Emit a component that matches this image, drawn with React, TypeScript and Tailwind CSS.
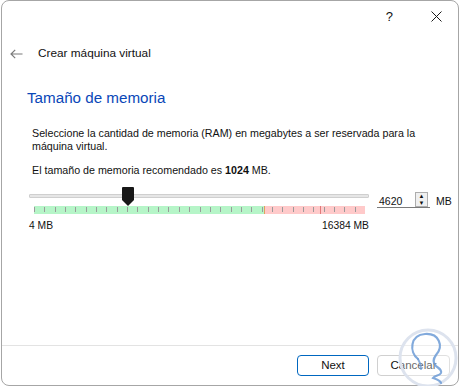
const TICKS = Array.from({ length: 32 }, (_, i) => i);
const BAR_WIDTH = 331;

function BackArrow() {
  return (
    <svg width="13" height="10" viewBox="0 0 13 10" fill="none" stroke="#7a7a7a" strokeWidth="1.2">
      <path d="M12.5 5H1M5.2 0.8L1 5l4.2 4.2" />
    </svg>
  );
}

function CloseIcon() {
  return (
    <svg width="11" height="11" viewBox="0 0 11 11" stroke="#1a1a1a" strokeWidth="1">
      <path d="M0.5 0.5l10 10M10.5 0.5l-10 10" />
    </svg>
  );
}

function Thumb() {
  return (
    <svg width="12" height="19" viewBox="0 0 12 19">
      <path d="M1 0h10a1 1 0 0 1 1 1v12l-6 6-6-6V1a1 1 0 0 1 1-1z" fill="#171717" />
    </svg>
  );
}

function Watermark() {
  return (
    <svg
      className="pointer-events-none absolute left-[396px] top-[326px]"
      width="64"
      height="60"
      viewBox="0 0 64 60"
      fill="none"
    >
      <circle cx="32" cy="32" r="28" stroke="#dde3ee" strokeWidth="3" fill="rgba(255,255,255,0.35)" />
      <path
        d="M22 33C13 26 14 9 29 8c14-1 19 12 11 21-3 4-3 8 0 11 2 2 6 3 5 7-1 3-6 2-8 5 3 1 7 2 8 5"
        stroke="#6c9bd6"
        strokeWidth="2.2"
        strokeLinecap="round"
        opacity="0.85"
      />
      <path d="M22 33c2 3 3 6 3 10" stroke="#6c9bd6" strokeWidth="2" strokeLinecap="round" opacity="0.8" />
    </svg>
  );
}

export default function App() {
  return (
    <div className="relative h-[386px] w-[460px] overflow-hidden bg-white font-['Liberation_Sans',Arial,sans-serif] text-[#111]">
      <div className="ml-[1px] flex h-[386px] w-[458px] flex-col rounded-[8px] border border-[#a6a6a6] bg-white">
        {/* title bar */}
        <div className="flex h-[31px] items-center justify-end">
          <span className="mr-[38px] text-[13px] leading-none">?</span>
          <span className="mr-[16px] flex">
            <CloseIcon />
          </span>
        </div>

        {/* header */}
        <div className="mt-[10px] flex h-[24px] items-center">
          <span className="ml-[8px] flex">
            <BackArrow />
          </span>
          <span className="ml-[15px] text-[11.8px]">Crear máquina virtual</span>
        </div>

        {/* page */}
        <div className="mt-[22px] pl-[25px] text-[15.2px] leading-[20px] text-[#0a47b8]">
          Tamaño de memoria
        </div>

        <div className="mt-[19px] w-[432px] pl-[30px] text-[10.7px] leading-[13px]">
          Seleccione la cantidad de memoria (RAM) en megabytes a ser reservada para la máquina virtual.
        </div>

        <div className="mt-[11px] pl-[30px] text-[10.7px] leading-[13px]">
          El tamaño de memoria recomendado es <b>1024</b> MB.
        </div>

        <div className="mt-[10px] flex">
          <div className="ml-[27px] w-[340px]">
            <div className="relative h-[19px] pt-[7px]">
              <div className="h-[4px] rounded-[1px] border border-[#cfcfcf] bg-[#e6e6e6]" />
              <div className="absolute left-[93px] top-0 flex">
                <Thumb />
              </div>
            </div>
            <div className="relative ml-[5px] flex h-[8px] w-[331px]">
              <div className="h-full w-[230px] bg-[#b6f5c8]" />
              <div className="h-full flex-1 bg-[#ffcaca]" />
              {TICKS.map((i) => (
                <div
                  key={i}
                  className="absolute top-[1px] h-[5px] w-px bg-[#9a9a9a]"
                  style={{ left: Math.round((i * BAR_WIDTH) / 32) }}
                />
              ))}
              <div className="absolute left-[230px] top-0 h-[8px] w-px bg-[#e0a060]" />
              <div className="absolute left-[286px] top-0 h-[8px] w-px bg-[#e07a7a]" />
            </div>
            <div className="mt-[6px] flex justify-between text-[10.3px] leading-[12px]">
              <span>4 MB</span>
              <span>16384 MB</span>
            </div>
          </div>

          <div className="ml-[8px] mt-[5px] flex h-[18px] items-start">
            <div className="flex w-[53px] items-start border-b border-[#7a7a7a]">
              <span className="ml-[2px] mt-[3px] w-[36px] text-[10.5px] leading-[12px]">4620</span>
              <div className="flex h-[15px] w-[13px] flex-col border border-[#adadad] bg-[#f0f0f0]">
                <div className="flex flex-1 items-center justify-center text-[6px] leading-none">▲</div>
                <div className="flex flex-1 items-center justify-center text-[6px] leading-none">▼</div>
              </div>
            </div>
            <span className="ml-[6px] mt-[3px] text-[10.5px] leading-[12px]">MB</span>
          </div>
        </div>

        <div className="flex-1" />

        {/* footer */}
        <div className="border-t border-[#e3e3e3] pb-[9px] pt-[9px]">
          <div className="flex justify-end gap-[8px] pr-[8px]">
            <button className="h-[21px] w-[72px] rounded-[4px] border border-[#0067c0] bg-white text-[11.5px] leading-none">
              Next
            </button>
            <button className="h-[21px] w-[73px] rounded-[4px] border border-[#d0d0d0] bg-white text-[11.5px] leading-none">
              Cancelar
            </button>
          </div>
        </div>
      </div>
      <Watermark />
    </div>
  );
}
